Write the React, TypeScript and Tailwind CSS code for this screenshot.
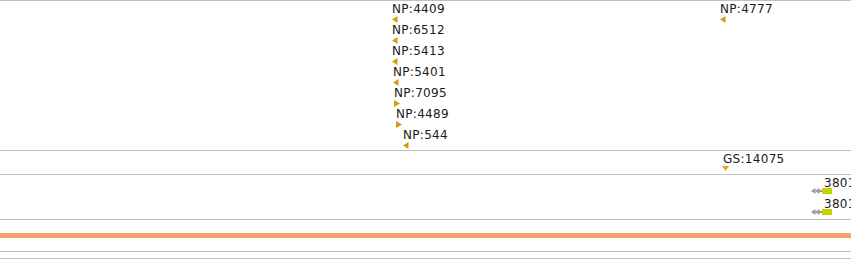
import React from "react";

const font = { fontFamily: '"DejaVu Sans", Verdana, sans-serif' };

function TriLeft({ x, y }: { x: number; y: number }) {
  return (
    <svg className="absolute" style={{ left: x, top: y }} width="6" height="7" viewBox="0 0 6 7">
      <polygon points="0,3.5 5.5,0 5.5,7" fill="#d99a06" />
    </svg>
  );
}
function TriRight({ x, y }: { x: number; y: number }) {
  return (
    <svg className="absolute" style={{ left: x, top: y }} width="6" height="7" viewBox="0 0 6 7">
      <polygon points="0,0 6,3.5 0,7" fill="#d99a06" />
    </svg>
  );
}
function TriDown({ x, y }: { x: number; y: number }) {
  return (
    <svg className="absolute" style={{ left: x, top: y }} width="7" height="5" viewBox="0 0 7 5">
      <polygon points="0,0 7,0 3.5,5" fill="#f0a020" />
    </svg>
  );
}

function Label({ x, y, text }: { x: number; y: number; text: string }) {
  return (
    <span
      className="absolute text-[12px] leading-[13px] text-[#1a1a1a] whitespace-nowrap tracking-[0.3px]"
      style={{ left: x, top: y, ...font }}
    >
      {text}
    </span>
  );
}

function Feature({ y }: { y: number }) {
  return (
    <>
      <Label x={824} y={y} text="3801" />
      <svg className="absolute" style={{ left: 811, top: y + 11 }} width="22" height="6" viewBox="0 0 22 6">
        <polygon points="0,3 4.5,0 4.5,6" fill="#9a9a9a" />
        <polygon points="4,3 8.5,0 8.5,6" fill="#9a9a9a" />
        <rect x="7" y="2" width="5" height="2" fill="#9a9a9a" />
        <rect x="11" y="0" width="10" height="6" fill="#c4d400" />
      </svg>
    </>
  );
}

export default function App() {
  const nps: { x: number; y: number; t: string; dir: "l" | "r" }[] = [
    { x: 392, y: 2, t: "NP:4409", dir: "l" },
    { x: 392, y: 23, t: "NP:6512", dir: "l" },
    { x: 392, y: 44, t: "NP:5413", dir: "l" },
    { x: 393, y: 65, t: "NP:5401", dir: "l" },
    { x: 394, y: 86, t: "NP:7095", dir: "r" },
    { x: 396, y: 107, t: "NP:4489", dir: "r" },
    { x: 403, y: 128, t: "NP:544", dir: "l" },
  ];
  return (
    <div className="w-[851px] h-[259px] bg-white overflow-hidden flex flex-col" style={font}>
      <div className="relative h-[150px] border-t border-[#c0c0c0] shrink-0">
        {nps.map((n) => (
          <React.Fragment key={n.t}>
            <Label x={n.x} y={n.y} text={n.t} />
            {n.dir === "l" ? <TriLeft x={n.x} y={n.y + 13} /> : <TriRight x={n.x} y={n.y + 13} />}
          </React.Fragment>
        ))}
        <Label x={720} y={2} text="NP:4777" />
        <TriLeft x={720} y={15} />
      </div>
      <div className="relative h-[24px] border-t border-[#c0c0c0] shrink-0">
        <Label x={723} y={2} text="GS:14075" />
        <TriDown x={722} y={15} />
      </div>
      <div className="relative h-[45px] border-t border-[#c0c0c0] shrink-0">
        <Feature y={2} />
        <Feature y={23} />
      </div>
      <div className="h-[14px] border-t border-[#c0c0c0] shrink-0" />
      <div className="h-[5px] bg-[#f2a26f] shrink-0" />
      <div className="h-[13px] shrink-0" />
      <div className="h-[7px] border-t border-[#c0c0c0] shrink-0" />
      <div className="h-[1px] bg-[#c0c0c0] shrink-0" />
    </div>
  );
}
